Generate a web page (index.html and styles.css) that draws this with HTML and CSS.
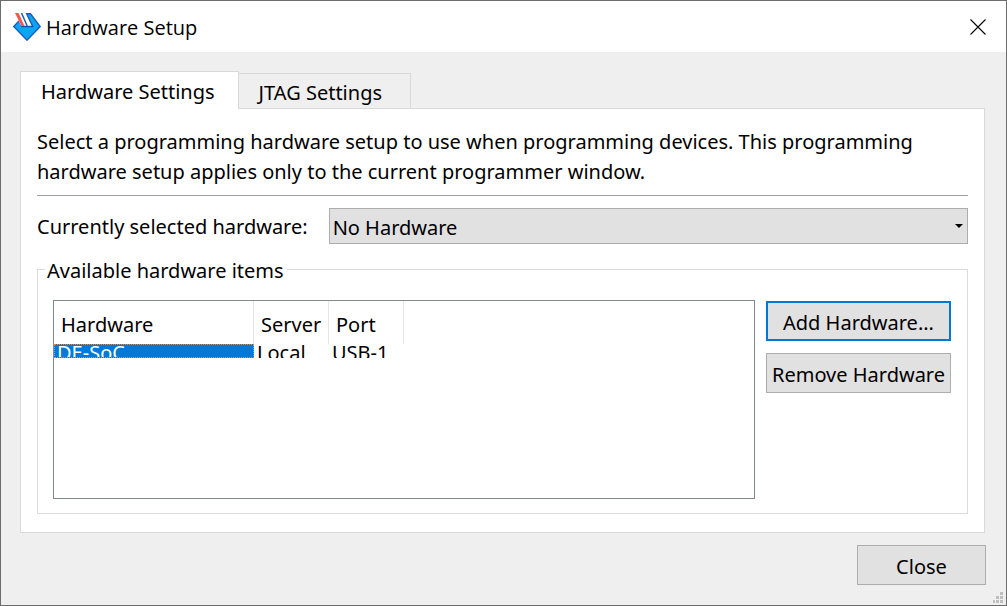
FILE: index.html
```html
<!DOCTYPE html>
<html lang="en">
<head>
<meta charset="utf-8">
<title>Hardware Setup</title>
<link rel="stylesheet" href="styles.css">
</head>
<body>
<main class="window">
  <header class="titlebar">
    <svg class="app-icon" viewBox="0 0 28 28" aria-hidden="true">
      <path d="M5.500 8.500 L.8 13.500 L14 27.200 L27.200 13.500 L17.500 .8 H13 Z" fill="#0aa5f5" stroke="#1c5fb8" stroke-width="1.400"/>
      <path d="M1.500 0 H13.500 L19.500 13 H8.500 Z" fill="#fff"/>
      <path d="M8 13.500 H20.500" stroke="#1450a8" stroke-width="1.400"/>
      <path d="M2 0 H5.500 L11.500 13 H8.500 Z" fill="#f9564a"/>
      <path d="M8.500 0 L14.200 13 M13.300 0 L19.500 13" stroke="#1c5fb8" stroke-width="1.500"/>
    </svg>
    <h1 class="title">Hardware Setup</h1>
    <button class="window-close" type="button" aria-label="Close window">
      <svg viewBox="0 0 16 16" width="16" height="16"><path d="M.5 .5 L15.500 15.500 M15.500 .5 L.5 15.500" stroke="#000" stroke-width="1.100"/></svg>
    </button>
  </header>
  <div class="content">
    <div class="tabs" role="tablist">
      <button class="tab tab-active" type="button" role="tab" aria-selected="true">Hardware Settings</button>
      <button class="tab" type="button" role="tab" aria-selected="false">JTAG Settings</button>
    </div>
    <section class="pane">
      <p class="intro">Select a programming hardware setup to use when programming devices. This programming hardware setup applies only to the current programmer window.</p>
      <hr class="rule">
      <div class="field">
        <label for="hardware">Currently selected hardware:</label>
        <div class="select-wrap">
          <select id="hardware" class="select"><option>No Hardware</option></select>
          <svg class="arrow" viewBox="0 0 8 4" width="8" height="4" aria-hidden="true"><path d="M0 0 H8 L4 4 Z"/></svg>
        </div>
      </div>
      <fieldset class="group">
        <legend>Available hardware items</legend>
        <div class="group-body">
          <div class="list">
            <table class="table">
              <thead><tr><th class="col-name">Hardware</th><th>Server</th><th>Port</th></tr></thead>
              <tbody><tr>
                <td><div class="cell selected">DE-SoC</div></td>
                <td><div class="cell">Local</div></td>
                <td><div class="cell">USB-1</div></td>
              </tr></tbody>
            </table>
          </div>
          <div class="actions">
            <button class="button button-default" type="button">Add Hardware...</button>
            <button class="button" type="button">Remove Hardware</button>
          </div>
        </div>
      </fieldset>
    </section>
    <footer class="footer"><button class="button button-close" type="button">Close</button></footer>
  </div>
  <svg class="grip" viewBox="0 0 10 11" width="10" height="11" aria-hidden="true"><path d="M7 0h3v3H7z M3 4h3v3H3z M7 4h3v3H7z M0 8h2v3H0z M3 8h3v3H3z M7 8h3v3H7z" fill="#bfbfbf"/></svg>
</main>
</body>
</html>
```
FILE: styles.css
```css
* { box-sizing: border-box; }
body {
  margin: 0;
  font: 20px/30px "Noto Sans", "Open Sans", sans-serif;
  color: #000;
}
button, select { font: inherit; color: inherit; border-radius: 0; }
.window {
  position: relative;
  display: flex;
  flex-direction: column;
  min-height: 100vh;
  background: #efefef;
  border: 1px solid #6d6d6d;
}
.titlebar {
  display: flex;
  align-items: center;
  height: 51px;
  padding: 0 20px 0 12px;
  background: #fff;
}
.app-icon { width: 28px; height: 28px; }
.title {
  margin: 0 auto 0 5px;
  padding-top: 2px;
  font-family: "Open Sans", "Noto Sans", sans-serif;
  font-size: 20px;
  font-weight: 400;
}
.window-close { display: flex; padding: 0; border: 0; background: none; }
.content {
  flex: 1;
  display: flex;
  flex-direction: column;
  padding: 19px 20px 20px 19px;
}
.tabs { display: flex; align-items: flex-end; }
.tab {
  height: 35px;
  padding: 2px 28px 0 20px;
  line-height: 34px;
  background: #efefef;
  border: 1px solid #d9d9d9;
  border-width: 1px 1px 0 0;
}
.tab-active {
  position: relative;
  z-index: 1;
  height: 38px;
  margin-bottom: -1px;
  padding: 2px 23px 0 20px;
  background: #fff;
  border-left-width: 1px;
}
.pane {
  flex: 1;
  display: flex;
  flex-direction: column;
  margin-right: 1px;
  padding: 18px 16px;
  background: #fff;
  border: 1px solid #d9d9d9;
}
.intro { margin: 0; }
.rule { width: 100%; height: 1px; margin: 8px 0 12px; border: 0; background: #a0a0a0; }
.field { display: flex; align-items: center; gap: 21px; }
.field label { padding-top: 2px; }
.select-wrap { position: relative; flex: 1; }
.select {
  display: block;
  width: 100%;
  height: 36px;
  padding: 3px 24px 0 3px;
  appearance: none;
  background: #e1e1e1;
  border: 1px solid #adadad;
}
.arrow { position: absolute; right: 5px; top: 16px; pointer-events: none; }
.group {
  min-width: 0;
  margin: 10px 0 0;
  padding: 16px 16px 14px 15px;
  border: 1px solid #dcdcdc;
}
.group legend { margin-left: -8px; padding: 4px 3px 0 2px; line-height: 26px; }
.group-body { display: flex; gap: 11px; }
.list { flex: 1; min-height: 199px; background: #fff; border: 1px solid #828790; }
.table { table-layout: fixed; width: 350px; border-collapse: separate; border-spacing: 0; }
.col-name { width: 200px; }
.table th {
  height: 43px;
  padding: 4px 0 0 7px;
  text-align: left;
  font-weight: 400;
  border-right: 1px solid #e5e5e5;
}
.table td { padding: 0; }
.cell { height: 14px; padding-left: 3px; line-height: 18px; overflow: hidden; }
.selected {
  padding-left: 2px;
  line-height: 16px;
  color: #fff;
  background: #0078d7;
  border: 1px dotted #ff8728;
}
.actions { display: flex; flex-direction: column; gap: 12px; width: 185px; padding-top: 1px; }
.button {
  height: 40px;
  padding: 4px 0 0;
  white-space: nowrap;
  background: #e1e1e1;
  border: 1px solid #adadad;
}
.button-default { border: 2px solid #0078d7; }
.footer { display: flex; justify-content: flex-end; padding-top: 12px; }
.button-close { width: 129px; }
.grip { position: absolute; right: 3px; bottom: 2px; }
```
